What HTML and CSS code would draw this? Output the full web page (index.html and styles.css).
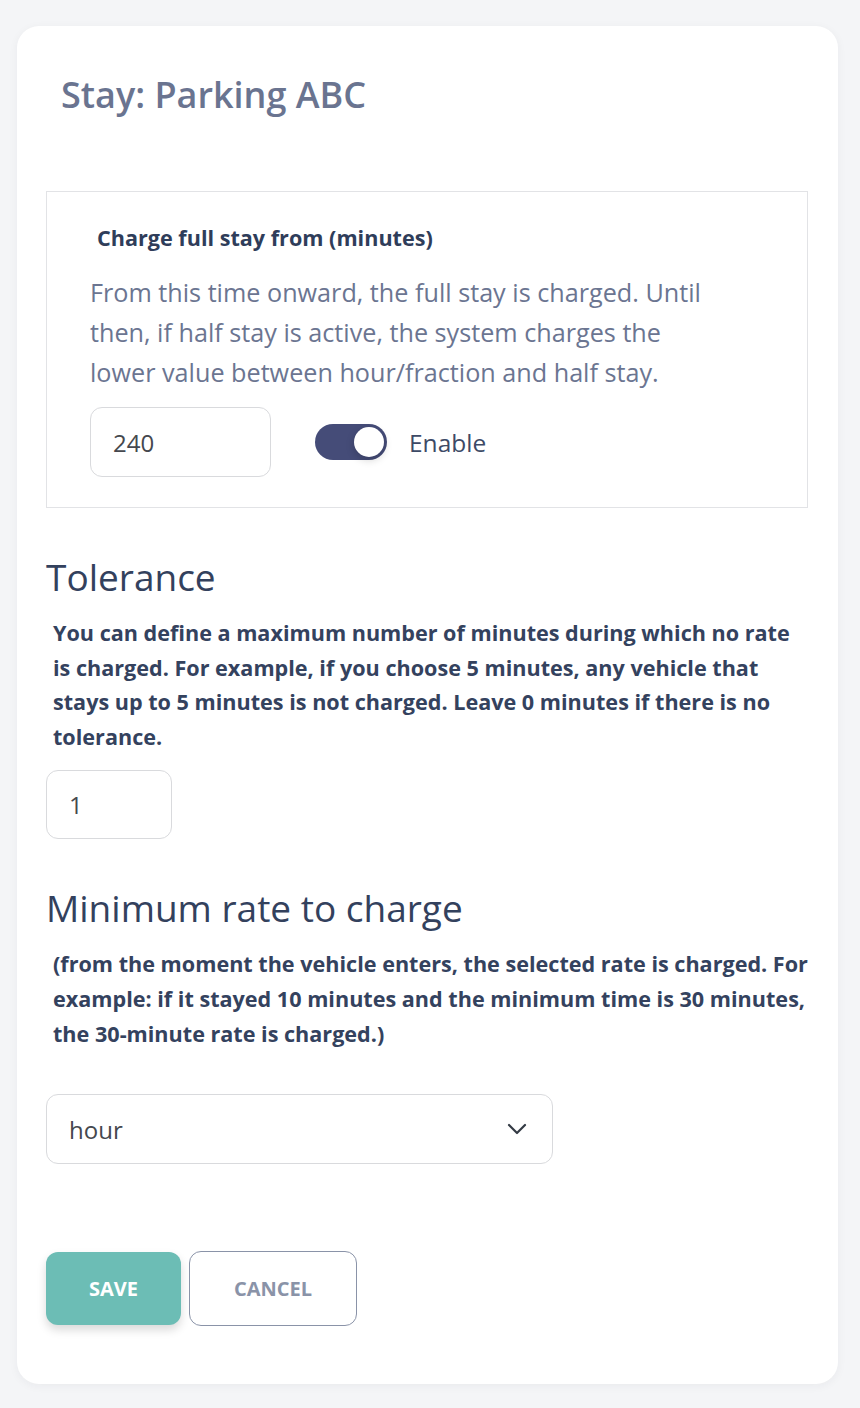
FILE: index.html
```html
<!DOCTYPE html>
<html lang="en">
<head>
<meta charset="utf-8">
<title>Stay: Parking ABC</title>
<link rel="stylesheet" href="styles.css">
</head>
<body>
<main class="card">
  <h1 class="card-title">Stay: Parking ABC</h1>

  <section class="panel">
    <h3 class="panel-label">Charge full stay from (minutes)</h3>
    <p class="panel-help">From this time onward, the full stay is charged. Until then, if half stay is active, the system charges the lower value between hour/fraction and half stay.</p>
    <div class="panel-row">
      <input class="field field-mid" type="text" value="240">
      <label class="switch">
        <span class="switch-track"><span class="switch-knob"></span></span>
        <span class="switch-text">Enable</span>
      </label>
    </div>
  </section>

  <h2 class="section-title section-title-first">Tolerance</h2>
  <p class="section-help">You can define a maximum number of minutes during which no rate is charged. For example, if you choose 5 minutes, any vehicle that stays up to 5 minutes is not charged. Leave 0 minutes if there is no tolerance.</p>
  <input class="field field-small" type="text" value="1">

  <h2 class="section-title">Minimum rate to charge</h2>
  <p class="section-help">(from the moment the vehicle enters, the selected rate is charged. For example: if it stayed 10 minutes and the minimum time is 30 minutes, the 30-minute rate is charged.)</p>
  <div class="select">
    <span class="select-value">hour</span>
    <svg class="select-arrow" width="20" height="12" viewBox="0 0 20 12" aria-hidden="true">
      <path d="M2 2 L10 10 L18 2" fill="none" stroke="#333a44" stroke-width="2.2" stroke-linecap="round" stroke-linejoin="round"/>
    </svg>
  </div>

  <div class="actions">
    <button class="btn btn-save" type="button">SAVE</button>
    <button class="btn btn-cancel" type="button">CANCEL</button>
  </div>
</main>
</body>
</html>
```

FILE: styles.css
```css
* {
  box-sizing: border-box;
}

html, body {
  margin: 0;
  padding: 0;
}

body {
  background: #f4f5f7;
  font-family: "Open Sans", "Noto Sans", sans-serif;
  padding: 26px 22px 24px 17px;
}

.card {
  width: 821px;
  height: 1358px;
  background: #ffffff;
  border-radius: 22px;
  box-shadow: 0 2px 10px rgba(30, 40, 60, 0.05);
  padding: 49px 30px 58px 29px;
  display: flex;
  flex-direction: column;
  align-items: flex-start;
}

.card-title {
  margin: 0 0 76px 15px;
  font-size: 36px;
  line-height: 40px;
  font-weight: 600;
  color: #6a7490;
}

.panel {
  width: 762px;
  border: 1px solid #e2e3e6;
  padding: 34px 40px 30px 43px;
}

.panel-label {
  margin: 0 0 22px 7px;
  font-size: 21.6px;
  line-height: 24px;
  font-weight: 700;
  color: #2f3d5a;
}

.panel-help {
  margin: 0 0 15px;
  max-width: 625px;
  font-size: 25.2px;
  line-height: 40px;
  font-weight: 400;
  color: #6b7591;
}

.panel-row {
  display: flex;
  align-items: center;
  gap: 44px;
}

.field {
  height: 70px;
  border: 1px solid #d9dadd;
  border-radius: 12px;
  padding: 0 22px;
  font-family: "Open Sans", "Noto Sans", sans-serif;
  font-size: 24px;
  color: #45484e;
  background: #fff;
  outline: none;
}

.field-mid {
  width: 181px;
}

.field-small {
  width: 126px;
}

.switch {
  display: flex;
  align-items: center;
  gap: 22px;
}

.switch-track {
  width: 72px;
  height: 36px;
  border-radius: 18px;
  background: #454c78;
  position: relative;
  display: block;
}

.switch-knob {
  position: absolute;
  top: 3px;
  right: 3px;
  width: 30px;
  height: 30px;
  border-radius: 50%;
  background: #ffffff;
  box-shadow: 0 3px 8px rgba(0, 0, 0, 0.18);
}

.switch-text {
  font-size: 24.5px;
  color: #3d4a66;
}

.section-title {
  margin: 0 0 17px;
  font-size: 37px;
  line-height: 44px;
  font-weight: 500;
  color: #33415d;
}

.section-title-first {
  margin-top: 47px;
}

.section-help {
  margin: 0 0 15px 7px;
  width: 757px;
  font-size: 21.6px;
  line-height: 34.7px;
  font-weight: 700;
  color: #34425e;
}

.field-small + .section-title {
  margin-top: 47px;
}

.select {
  margin-top: 28px;
  width: 507px;
  height: 70px;
  border: 1px solid #d9dadd;
  border-radius: 12px;
  padding: 0 25px 0 22px;
  display: flex;
  align-items: center;
  justify-content: space-between;
}

.select-value {
  font-size: 24px;
  color: #45484e;
}

.actions {
  margin-top: 87px;
  display: flex;
  align-items: center;
  gap: 8px;
}

.btn {
  font-family: "Open Sans", "Noto Sans", sans-serif;
  font-size: 20px;
  font-weight: 700;
  border-radius: 12px;
  cursor: pointer;
}

.btn-save {
  width: 135px;
  height: 73px;
  border: none;
  background: #6cbdb5;
  color: #ffffff;
  box-shadow: 0 5px 10px rgba(0, 0, 0, 0.15);
}

.btn-cancel {
  width: 168px;
  height: 75px;
  border: 1px solid #8a93a8;
  background: #ffffff;
  color: #8a93a8;
}
```
